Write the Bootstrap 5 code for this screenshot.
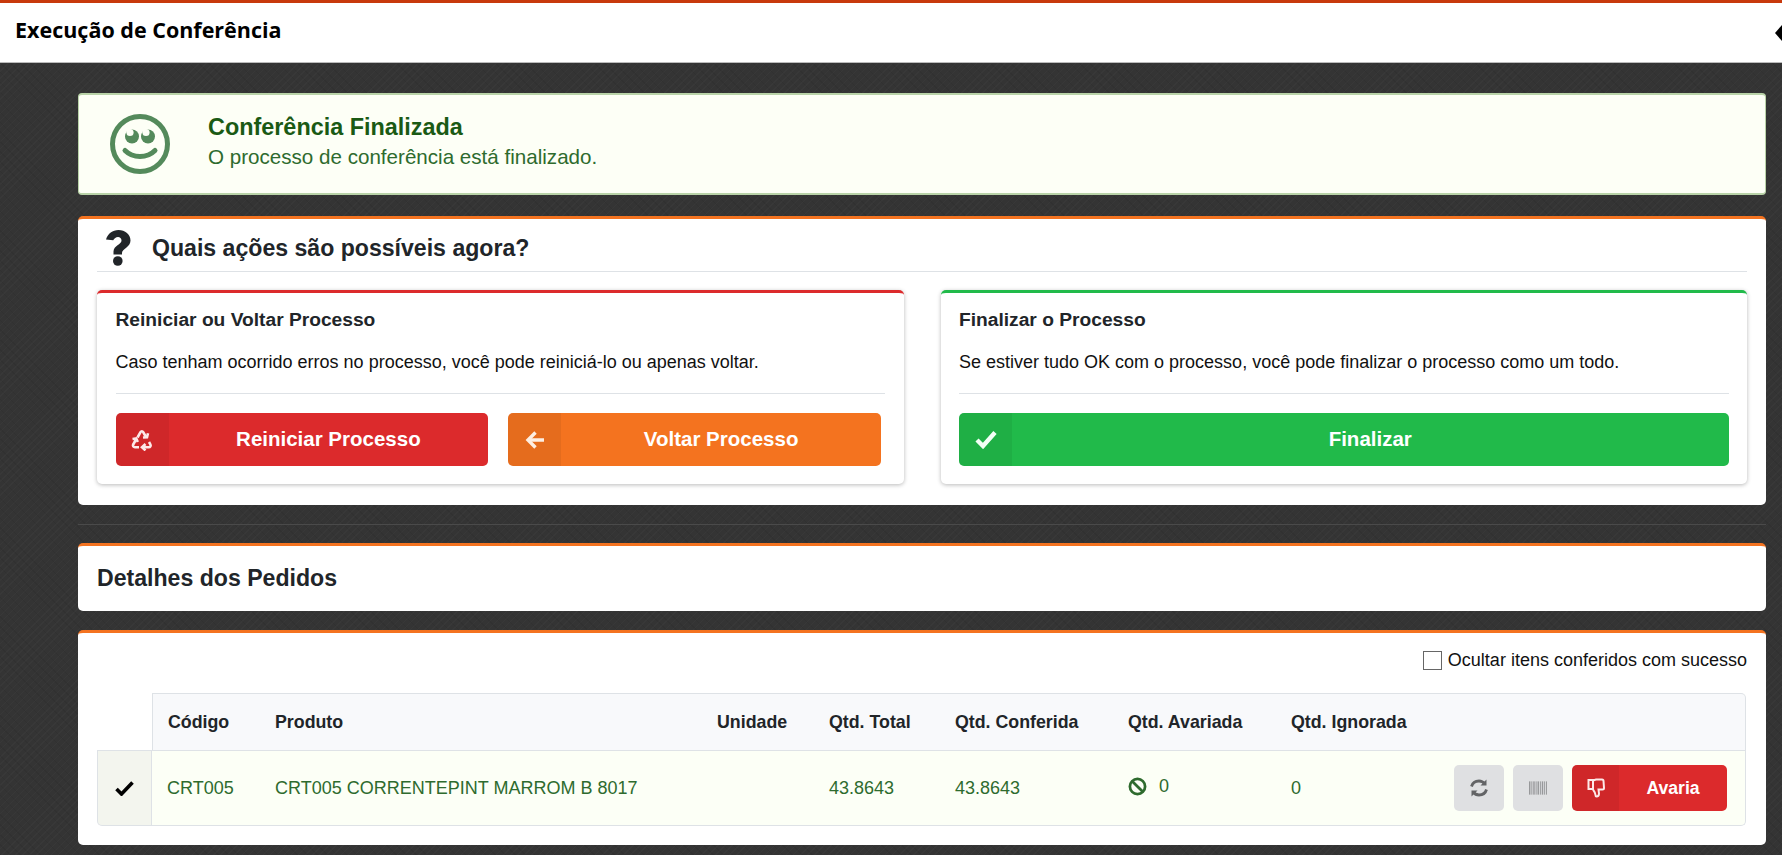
<!DOCTYPE html>
<html lang="pt-BR">
<head>
<meta charset="utf-8">
<title>Execução de Conferência</title>
<link href="https://cdn.jsdelivr.net/npm/bootstrap@5.3.0/dist/css/bootstrap.min.css" rel="stylesheet">
<style>
html,body{height:855px;overflow:hidden}
body{font-family:"Liberation Sans",Arial,sans-serif;font-size:18px;color:#212529;background-color:#343434;
 background-image:repeating-linear-gradient(135deg,rgba(255,255,255,.018) 0 1px,transparent 1px 5px),repeating-linear-gradient(45deg,rgba(0,0,0,.06) 0 1px,transparent 1px 7px)}
.topbar{height:63px;background:#fff;border-top:3px solid #c8390c;border-bottom:1px solid #bbb;padding-left:15px}
.topbar-title{font-family:"Open Sans",sans-serif;font-weight:700;font-size:21.5px;color:#000;margin:0 0 5px}
.page-area{padding:30px 16px 0 78px}
.done-alert{height:102px;background:#fdfff6;border:1px solid #b9d3a8;border-width:2px 1px;border-radius:4px;margin-bottom:21px;padding-left:31px;color:#2e6b2e}
.done-icon{margin-right:38px}
.done-copy{margin-bottom:4px}
.done-title{font-size:23.4px;font-weight:700;color:#1a5a14;margin:0;line-height:30px}
.done-text{font-size:20.6px;margin:0;line-height:30px}
.panel-box{background:#fff;border-top:3px solid #f47320;border-radius:5px}
.actions-panel{height:289px;padding:0 19px;margin-bottom:19px}
.actions-head{height:53px;border-bottom:1px solid #dee2e6;padding:5px 0 0 8px}
.actions-head h2{font-size:23.1px;font-weight:700;margin:0 0 0 21px;position:relative;top:1px}
.choice-wrap{margin-top:18px;gap:37px}
.choice{flex:1 1 0;height:194px;background:#fff;border-top:3px solid #dc2a2c;border-radius:5px;box-shadow:0 1px 4px rgba(0,0,0,.28);padding:15px 18.5px 0}
.choice-green{border-top-color:#21ba4a}
.choice h3{font-size:19.2px;font-weight:700;margin:0 0 18px;line-height:24px}
.choice p{font-size:18px;margin:0;color:#111;line-height:24px}
.choice hr{margin:19px 0 19px;border-color:#dee2e6;opacity:1}
.act-btn{display:flex;align-items:stretch;height:53px;padding:0;border:0;border-radius:5px;color:#fff;font-weight:700;font-size:20.5px;flex:1 1 0;overflow:hidden}
.act-ic{width:53px;flex:none;display:flex;align-items:center;justify-content:center;background:rgba(0,0,0,.06)}
.act-tx{flex:1;display:flex;align-items:center;justify-content:center}
.bg-red{background:#dc2a2c}.bg-orange{background:#f4731f}.bg-green{background:#21ba4a}
.btn-gap{gap:20px;padding-right:4px}
.rule-line{height:1px;background:#4a4a4a;margin-bottom:18px}
.title-panel{height:68px;margin-bottom:19px;padding-left:19px}
.title-panel h2{font-size:23.1px;font-weight:700;margin:0}
.table-panel{height:215px;padding:15px 19px 0}
.hide-row{font-size:18px;color:#111;margin-bottom:21px;line-height:24px}
.box-check{width:19px;height:19px;border:1.5px solid #666;margin-right:6px;display:inline-block;background:#fff}
.order-table{table-layout:fixed;width:1649px;margin:0;border-collapse:separate;border-spacing:0}
.order-table th,.order-table td{padding:0 0 0 16px;vertical-align:middle;box-shadow:none}
.order-table th:nth-child(2),.order-table td:nth-child(2){padding-left:15px}
.order-table thead th{height:58px;background:#f8f9fb;border-top:1px solid #dee2e6;border-bottom:1px solid #dee2e6;font-size:17.8px;font-weight:700;color:#212529}
.order-table thead th.blank-th{background:#fff;border:0;border-bottom:1px solid #dee2e6}
.order-table thead th:nth-child(2){border-left:1px solid #dee2e6}
.order-table thead th:last-child{border-right:1px solid #dee2e6;border-top-right-radius:5px}
.order-table tbody td{height:75px;background:#fcfff6;border-bottom:1px solid #dee2e6;font-size:18px;color:#2e6b2e}
.order-table tbody td.check-td{background:#f3f5ee;padding:0;text-align:center;border-left:1px solid #dee2e6;border-right:1px solid #dee2e6;border-bottom-left-radius:5px}
.order-table tbody td:last-child{border-right:1px solid #dee2e6;border-bottom-right-radius:5px}
.w-a{width:55px}.w-b{width:107px}.w-c{width:442px}.w-d{width:112px}.w-e{width:126px}.w-f{width:173px}.w-g{width:163px}.w-h{width:471px}
.ban-gap{gap:12px}
.row-acts{gap:9px;padding-right:18px}
.gray-btn{width:50px;height:46px;background:#dfe0e2;border:0;border-radius:5px;padding:0;display:flex;align-items:center;justify-content:center}
.avaria-btn{width:155px;height:46px;flex:none;font-size:17.6px}
.avaria-btn .act-ic{width:47px}
</style>
</head>
<body>
<header class="topbar d-flex align-items-center justify-content-between">
  <h1 class="topbar-title">Execução de Conferência</h1>
  <svg width="7" height="18" viewBox="0 0 7 18"><path d="M0 9 7 1v16z" fill="#000"/></svg>
</header>

<main class="page-area">
  <section class="done-alert d-flex align-items-center">
    <svg class="done-icon" width="60" height="60" viewBox="0 0 60 60" fill="none">
      <circle cx="30" cy="30" r="27.5" stroke="#548a5b" stroke-width="5"/>
      <circle cx="22" cy="22.500" r="7" fill="#548a5b"/><circle cx="38" cy="22.500" r="7" fill="#548a5b"/>
      <circle cx="20" cy="18.500" r="3.600" fill="#fdfff6"/><circle cx="36" cy="18.500" r="3.600" fill="#fdfff6"/>
      <path d="M15 36.500c8 8 22 8 30 0" stroke="#548a5b" stroke-width="5" stroke-linecap="round"/>
    </svg>
    <div class="done-copy">
      <p class="done-title">Conferência Finalizada</p>
      <p class="done-text">O processo de conferência está finalizado.</p>
    </div>
  </section>

  <section class="panel-box actions-panel">
    <div class="actions-head d-flex align-items-center">
      <svg width="26" height="36" viewBox="0 0 26 36" fill="#212529"><path d="M1 9.500C3 3.500 7.500 0 13.500 0 20 0 25.500 4.500 25.500 10.500c0 7-8.500 8-8.500 12.500v1.500H8.500v-3c0-6 8-7 8-11 0-2-1.600-3.500-3.500-3.500-2.200 0-3.600 1.300-4.800 3.300z"/><circle cx="12.800" cy="31" r="4.800"/></svg>
      <h2>Quais ações são possíveis agora?</h2>
    </div>
    <div class="choice-wrap d-flex">
      <article class="choice">
        <h3>Reiniciar ou Voltar Processo</h3>
        <p>Caso tenham ocorrido erros no processo, você pode reiniciá-lo ou apenas voltar.</p>
        <hr>
        <div class="d-flex btn-gap">
          <button class="act-btn bg-red" type="button">
            <span class="act-ic"><svg width="22" height="22" viewBox="0 0 22 22" fill="none" stroke="#fde9e9" stroke-width="2.600"><path d="M6.500 8.500 9.500 3.200c.7-1.200 2-1.200 2.700 0L15 8"/><path d="M12 8.500 16 8.200l1-4"/><path d="M5 10.500 2.200 15.500c-.7 1.300.2 2.700 1.700 2.700H8"/><path d="M1.500 10 5.200 9.500l1.600 3.500"/><path d="M11.500 18.200h6.300c1.500 0 2.300-1.400 1.600-2.700L18 13"/><path d="M14.500 15 11 18.200l3.500 3.200"/></svg></span>
            <span class="act-tx">Reiniciar Processo</span>
          </button>
          <button class="act-btn bg-orange" type="button">
            <span class="act-ic"><svg width="20" height="20" viewBox="0 0 20 20" fill="none" stroke="#fdeee2" stroke-width="3.400"><path d="M10.500 2.500 3 10l7.500 7.500"/><path d="M3.500 10H19"/></svg></span>
            <span class="act-tx">Voltar Processo</span>
          </button>
        </div>
      </article>
      <article class="choice choice-green">
        <h3>Finalizar o Processo</h3>
        <p>Se estiver tudo OK com o processo, você pode finalizar o processo como um todo.</p>
        <hr>
        <button class="act-btn bg-green w-100" type="button">
          <span class="act-ic"><svg width="22" height="19" viewBox="0 0 22 19" fill="none" stroke="#f2fff5" stroke-width="4.400"><path d="M2 10 8 16 20 2.500"/></svg></span>
          <span class="act-tx">Finalizar</span>
        </button>
      </article>
    </div>
  </section>

  <div class="rule-line"></div>

  <section class="panel-box title-panel d-flex align-items-center">
    <h2>Detalhes dos Pedidos</h2>
  </section>

  <section class="panel-box table-panel">
    <div class="hide-row d-flex align-items-center justify-content-end"><span class="box-check"></span>Ocultar itens conferidos com sucesso</div>
    <table class="table order-table">
      <colgroup><col class="w-a"><col class="w-b"><col class="w-c"><col class="w-d"><col class="w-e"><col class="w-f"><col class="w-g"><col class="w-h"></colgroup>
      <thead>
        <tr><th class="blank-th"></th><th>Código</th><th>Produto</th><th>Unidade</th><th>Qtd. Total</th><th>Qtd. Conferida</th><th>Qtd. Avariada</th><th>Qtd. Ignorada</th></tr>
      </thead>
      <tbody>
        <tr>
          <td class="check-td"><svg width="19" height="15" viewBox="0 0 19 15" fill="none" stroke="#000" stroke-width="3.600"><path d="M1.500 8 6.500 13 17.500 1.500"/></svg></td>
          <td>CRT005</td>
          <td>CRT005 CORRENTEPINT MARROM B 8017</td>
          <td></td>
          <td>43.8643</td>
          <td>43.8643</td>
          <td><span class="d-inline-flex align-items-center ban-gap"><svg width="19" height="19" viewBox="0 0 18 18" fill="none" stroke="#2e6b2e" stroke-width="2.600"><circle cx="9" cy="9" r="7.200"/><path d="M4 4l10 10"/></svg>0</span></td>
          <td>
            <div class="d-flex align-items-center justify-content-between">
              <span>0</span>
              <div class="d-flex row-acts">
                <button class="gray-btn" type="button" aria-label="Atualizar"><svg width="20" height="20" viewBox="0 0 20 20" fill="none" stroke="#636466" stroke-width="2.800"><path d="M2.500 8.500C3.500 5 6.500 3 10 3c2.500 0 4.500 1.200 6 3"/><path d="M17.500 11.500C16.500 15 13.500 17 10 17c-2.500 0-4.500-1.200-6-3"/><path d="M17.500 1.500v6h-6z" fill="#636466" stroke="none"/><path d="M2.500 18.500v-6h6z" fill="#636466" stroke="none"/></svg></button>
                <button class="gray-btn" type="button" aria-label="Código de barras"><svg width="18" height="14" viewBox="0 0 19 14" fill="#97989a"><rect width="1.500" height="14"/><rect x="2.500" width="1" height="14"/><rect x="4.500" width="1.500" height="14"/><rect x="7" width="1" height="14"/><rect x="9" width="1.500" height="14"/><rect x="11.500" width="1" height="14"/><rect x="13.500" width="1.500" height="14"/><rect x="16" width="1" height="14"/><rect x="18" width="1" height="14"/></svg></button>
                <button class="act-btn avaria-btn bg-red" type="button">
                  <span class="act-ic"><svg width="18" height="20" viewBox="0 0 18 20" fill="none" stroke="#fde9e9" stroke-width="2"><path d="M1.500 2h4.500v9H1.500z"/><path d="M6 2.500 9 1.500h6c1 0 1.500.6 1.500 1.500l.5 7c0 1-.6 1.500-1.500 1.500H11.500l.5 4c0 1.800-1 3-2.500 3-.7 0-1-.7-1-1.500 0-3-2.500-5-2.500-5.500"/></svg></span>
                  <span class="act-tx">Avaria</span>
                </button>
              </div>
            </div>
          </td>
        </tr>
      </tbody>
    </table>
  </section>
</main>
<script src="https://cdn.jsdelivr.net/npm/bootstrap@5.3.0/dist/js/bootstrap.bundle.min.js"></script>
</body>
</html>
